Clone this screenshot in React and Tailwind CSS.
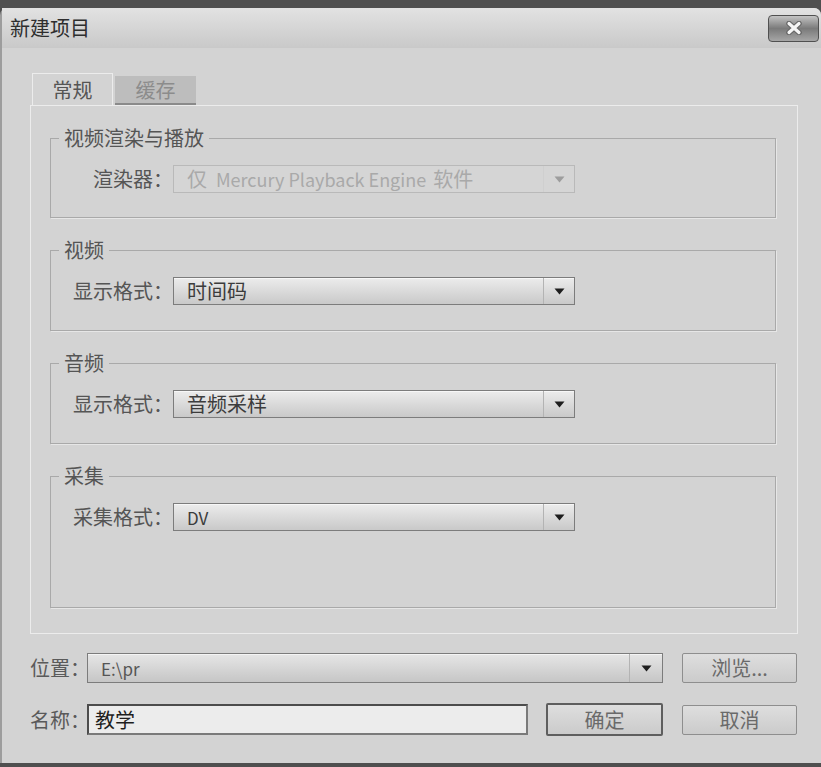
import React from 'react'

const font = { fontFamily: '"Noto Sans CJK SC", "Noto Sans", sans-serif' }

function Arrow() {
  return (
    <svg width="11" height="7" viewBox="0 0 11 7">
      <path d="M0.5 0.5 L10.5 0.5 L5.5 6.5 Z" fill="#1e1e1e" />
    </svg>
  )
}

function Dropdown({ children, disabled, width = 'w-[402px]' }) {
  return (
    <div
      className={`flex h-[28px] ${width} border ${
        disabled
          ? 'border-[#b9b9b9] bg-[#d5d5d5] text-[#a9a9a9]'
          : 'border-[#7c7c7c] bg-gradient-to-b from-[#ececec] to-[#c9c9c9] text-[#3c3c3c] shadow-[inset_0_1px_0_#f7f7f7]'
      }`}
    >
      <div className="flex flex-1 items-center pl-[13px] text-[20px] leading-none whitespace-nowrap">{children}</div>
      <div className={`flex w-[31px] items-center justify-center border-l ${disabled ? 'border-[#c4c4c4] opacity-30' : 'border-[#b3b3b3]'}`}>
        <Arrow />
      </div>
    </div>
  )
}

function Group({ title, height, children }) {
  return (
    <fieldset className={`${height} border border-[#a9a9a9] shadow-[1px_1px_0_#e6e6e6]`}>
      <legend className="ml-[8px] px-[5px] text-[20px] leading-[20px] text-[#555]">{title}</legend>
      <div className="mt-[17px] flex items-center">
        {children}
      </div>
    </fieldset>
  )
}

function Label({ children }) {
  return <div className="w-[122px] shrink-0 whitespace-nowrap text-right text-[20px] leading-none text-[#555]">{children}</div>
}

function Button({ children, primary, className = '' }) {
  return (
    <div
      className={`flex shrink-0 items-center justify-center rounded-[2px] bg-gradient-to-b from-[#dedede] to-[#cbcbcb] text-[20px] leading-none text-[#6a6a6a] ${
        primary ? 'h-[33px] w-[117px] border-2 border-[#5e5e5e]' : 'h-[30px] w-[115px] border border-[#8e8e8e]'
      } ${className}`}
    >
      {children}
    </div>
  )
}

export default function App() {
  return (
    <div className="h-[767px] w-[821px] overflow-hidden bg-[#4f4f4f] pt-[8px] pb-[4px]" style={font}>
      <div className="flex h-full flex-col rounded-t-[7px] border-l-2 border-[#9d9d9d] bg-[#d3d3d3]">
        <div className="flex h-[40px] items-center justify-between rounded-tr-[7px] bg-gradient-to-b from-[#e2e2e2] to-[#c9c9c9] pl-[8px] pr-[2px]">
          <div className="text-[20px] leading-none text-[#2e2e2e]">新建项目</div>
          <div className="flex h-[27px] w-[51px] items-center justify-center rounded-[4px] border border-[#505050] bg-gradient-to-b from-[#c4c4c4] via-[#7a7a7a] to-[#a6a6a6]">
            <svg width="18" height="14" viewBox="0 0 18 14">
              <path d="M4 2.5 L14 11.5 M14 2.5 L4 11.5" stroke="#666" strokeWidth="5.5" strokeLinecap="round" />
              <path d="M4 2.5 L14 11.5 M14 2.5 L4 11.5" stroke="#f4f4f4" strokeWidth="3.2" strokeLinecap="round" />
            </svg>
          </div>
        </div>

        <div className="flex flex-1 flex-col pl-[28px] pr-[23px] pt-[25px]">
          <div className="flex h-[32px] items-end pl-[2px]">
            <div className="flex h-[32px] w-[81px] items-center justify-center border-x border-t border-[#ececec] bg-[#d3d3d3] text-[20px] leading-none text-[#555]">
              常规
            </div>
            <div className="ml-[2px] flex h-[29px] w-[81px] items-center justify-center border-b-2 border-[#8a8a8a] bg-[#bdbdbd] text-[20px] leading-none text-[#8c8c8c]">
              缓存
            </div>
          </div>

          <div className="flex h-[529px] flex-col gap-[22px] border border-[#ececec] pl-[19px] pr-[21px] pt-[22px]">
            <Group title="视频渲染与播放" height="h-[90px]">
              <Label>渲染器：</Label>
              <Dropdown disabled>
                仅<span className="ml-[9px] text-[18px]">Mercury Playback Engine</span>
                <span className="ml-[7px]">软件</span>
              </Dropdown>
            </Group>
            <Group title="视频" height="h-[91px]">
              <Label>显示格式：</Label>
              <Dropdown>时间码</Dropdown>
            </Group>
            <Group title="音频" height="h-[91px]">
              <Label>显示格式：</Label>
              <Dropdown>音频采样</Dropdown>
            </Group>
            <Group title="采集" height="h-[142px]">
              <Label>采集格式：</Label>
              <Dropdown>
                <span className="text-[17px]">DV</span>
              </Dropdown>
            </Group>
          </div>

          <div className="mt-[19px] flex items-center">
            <div className="w-[57px] shrink-0 whitespace-nowrap text-[20px] leading-none text-[#5a5a5a]">位置：</div>
            <div className="flex h-[30px] w-[576px] shrink-0 border border-[#7c7c7c] bg-gradient-to-b from-[#e6e6e6] to-[#c6c6c6] shadow-[inset_0_1px_0_#f5f5f5]">
              <div className="flex flex-1 items-center pl-[13px] text-[17px] leading-none text-[#555]">E:\pr</div>
              <div className="flex w-[33px] items-center justify-center border-l border-[#b3b3b3]">
                <Arrow />
              </div>
            </div>
            <Button className="ml-[19px]">浏览...</Button>
          </div>

          <div className="mt-[20px] flex items-center">
            <div className="w-[57px] shrink-0 whitespace-nowrap text-[20px] leading-none text-[#5a5a5a]">名称：</div>
            <div className="flex h-[31px] w-[441px] shrink-0 items-center border-2 border-[#4c4c4c] border-b-[#7a7a7a] border-r-[#7a7a7a] bg-[#ececec] pl-[6px] text-[20px] leading-none text-[#1e1e1e]">
              教学
            </div>
            <Button primary className="ml-[18px]">确定</Button>
            <Button className="ml-[19px]">取消</Button>
          </div>
        </div>
      </div>
    </div>
  )
}
